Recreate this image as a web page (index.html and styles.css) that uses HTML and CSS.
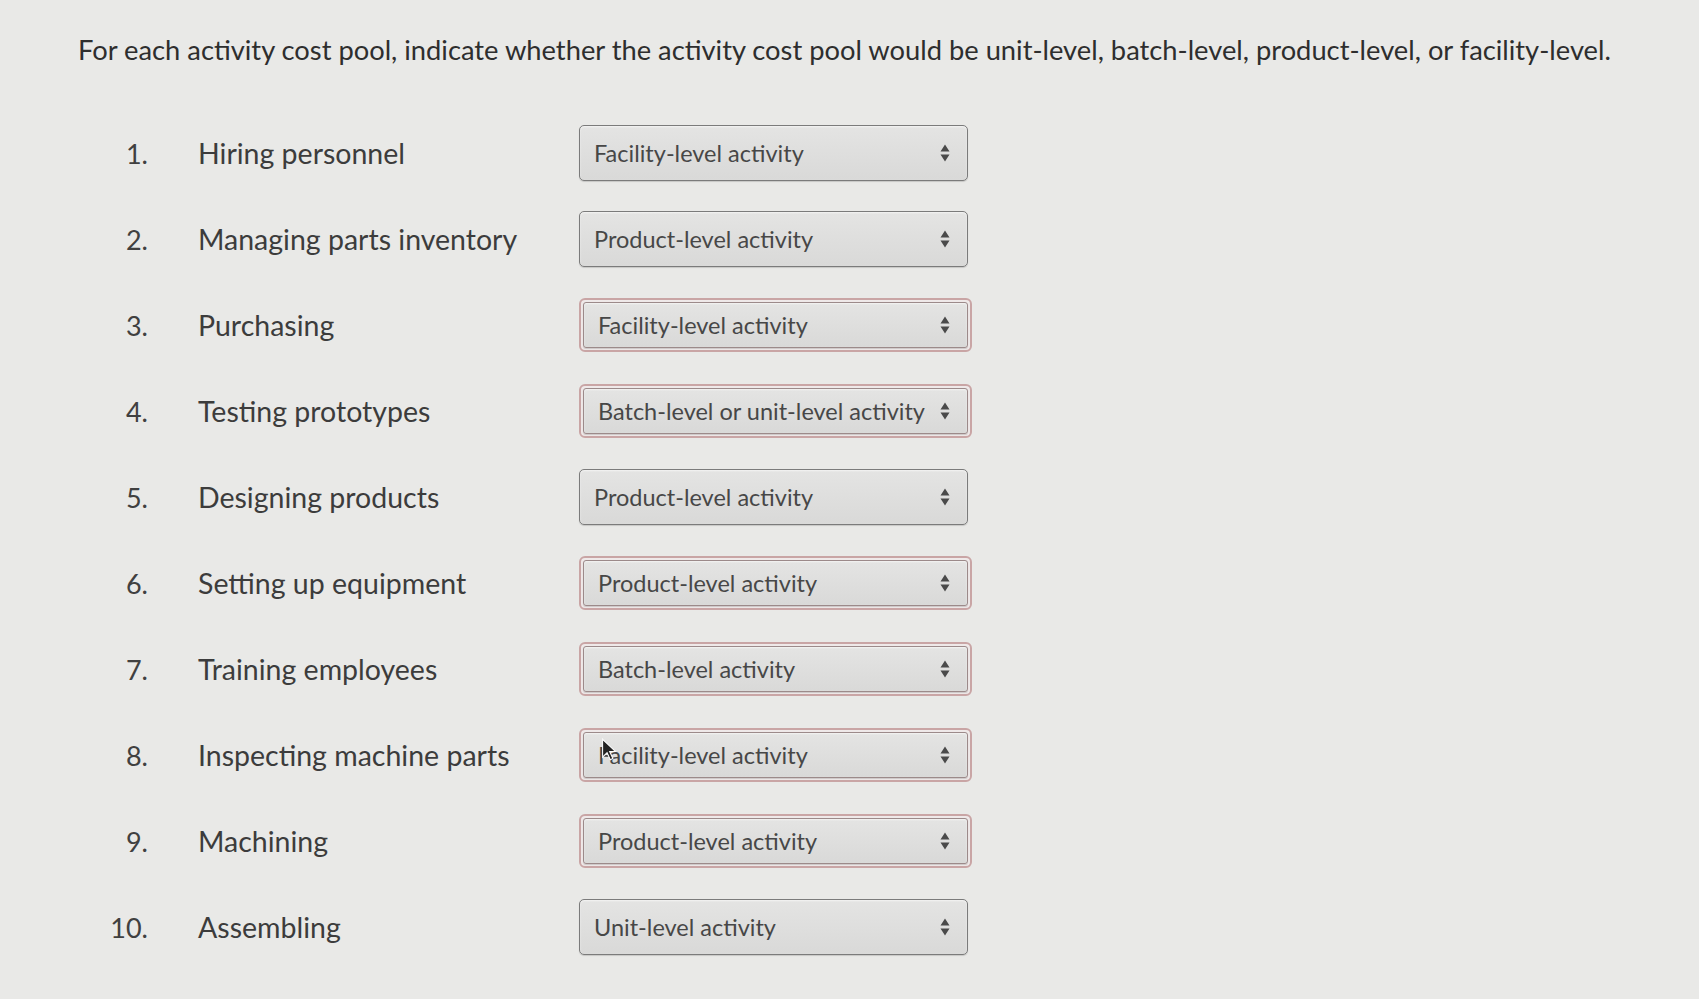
FILE: index.html
```html
<!DOCTYPE html>
<html lang="en">
<head>
<meta charset="utf-8">
<title>Activity cost pools</title>
<link rel="stylesheet" href="styles.css">
</head>
<body>
<main class="page">
  <p class="prompt">For each activity cost pool, indicate whether the activity cost pool would be unit-level, batch-level, product-level, or facility-level.</p>
  <ol class="items">
    <li class="item"><span class="num">1.</span><span class="label">Hiring personnel</span>
      <div class="answer"><div class="select"><span class="value">Facility-level activity</span><svg class="arrows" viewBox="0 0 10 20"><path d="M5 1.5 L9.5 8.5 H0.5 Z M5 18.5 L9.5 11.5 H0.5 Z"/></svg></div></div></li>
    <li class="item"><span class="num">2.</span><span class="label">Managing parts inventory</span>
      <div class="answer"><div class="select"><span class="value">Product-level activity</span><svg class="arrows" viewBox="0 0 10 20"><path d="M5 1.5 L9.5 8.5 H0.5 Z M5 18.5 L9.5 11.5 H0.5 Z"/></svg></div></div></li>
    <li class="item"><span class="num">3.</span><span class="label">Purchasing</span>
      <div class="answer wrong"><div class="select"><span class="value">Facility-level activity</span><svg class="arrows" viewBox="0 0 10 20"><path d="M5 1.5 L9.5 8.5 H0.5 Z M5 18.5 L9.5 11.5 H0.5 Z"/></svg></div></div></li>
    <li class="item"><span class="num">4.</span><span class="label">Testing prototypes</span>
      <div class="answer wrong"><div class="select"><span class="value">Batch-level or unit-level activity</span><svg class="arrows" viewBox="0 0 10 20"><path d="M5 1.5 L9.5 8.5 H0.5 Z M5 18.5 L9.5 11.5 H0.5 Z"/></svg></div></div></li>
    <li class="item"><span class="num">5.</span><span class="label">Designing products</span>
      <div class="answer"><div class="select"><span class="value">Product-level activity</span><svg class="arrows" viewBox="0 0 10 20"><path d="M5 1.5 L9.5 8.5 H0.5 Z M5 18.5 L9.5 11.5 H0.5 Z"/></svg></div></div></li>
    <li class="item"><span class="num">6.</span><span class="label">Setting up equipment</span>
      <div class="answer wrong"><div class="select"><span class="value">Product-level activity</span><svg class="arrows" viewBox="0 0 10 20"><path d="M5 1.5 L9.5 8.5 H0.5 Z M5 18.5 L9.5 11.5 H0.5 Z"/></svg></div></div></li>
    <li class="item"><span class="num">7.</span><span class="label">Training employees</span>
      <div class="answer wrong"><div class="select"><span class="value">Batch-level activity</span><svg class="arrows" viewBox="0 0 10 20"><path d="M5 1.5 L9.5 8.5 H0.5 Z M5 18.5 L9.5 11.5 H0.5 Z"/></svg></div></div></li>
    <li class="item"><span class="num">8.</span><span class="label">Inspecting machine parts</span>
      <div class="answer wrong"><div class="select"><span class="value">Facility-level activity</span><svg class="arrows" viewBox="0 0 10 20"><path d="M5 1.5 L9.5 8.5 H0.5 Z M5 18.5 L9.5 11.5 H0.5 Z"/></svg></div>
        <svg class="cursor" viewBox="0 0 12 18"><path d="M1 1 L1 15 L4.5 11.5 L7 17 L9 16 L6.5 10.5 L11 10.5 Z"/></svg></div></li>
    <li class="item"><span class="num">9.</span><span class="label">Machining</span>
      <div class="answer wrong"><div class="select"><span class="value">Product-level activity</span><svg class="arrows" viewBox="0 0 10 20"><path d="M5 1.5 L9.5 8.5 H0.5 Z M5 18.5 L9.5 11.5 H0.5 Z"/></svg></div></div></li>
    <li class="item"><span class="num">10.</span><span class="label">Assembling</span>
      <div class="answer"><div class="select"><span class="value">Unit-level activity</span><svg class="arrows" viewBox="0 0 10 20"><path d="M5 1.5 L9.5 8.5 H0.5 Z M5 18.5 L9.5 11.5 H0.5 Z"/></svg></div></div></li>
  </ol>
</main>
</body>
</html>
```
FILE: styles.css
```css
html, body {
  margin: 0;
  padding: 0;
}
body {
  background: #e9e9e7;
  font-family: Lato, "Open Sans", "Liberation Sans", sans-serif;
  color: #3b3b3b;
  width: 1699px;
  height: 999px;
  overflow: hidden;
}
.page {
  padding: 30px 0 0 78px;
}
.prompt {
  margin: 0;
  font-size: 27.3px;
  line-height: 40px;
  color: #2e2e2e;
}
.items {
  list-style: none;
  margin: 54px 0 0 0;
  padding: 0;
  display: flex;
  flex-direction: column;
  gap: 28px;
}
.item {
  display: grid;
  grid-template-columns: 70px 331px 400px;
  column-gap: 50px;
  align-items: center;
  height: 58px;
}
.num {
  text-align: right;
  font-size: 27px;
  color: #404040;
}
.label {
  font-size: 28.5px;
  color: #3c3c3c;
}
.answer {
  position: relative;
  width: 389px;
  height: 56px;
  box-sizing: border-box;
  border-radius: 6px;
  display: flex;
}
.answer.wrong {
  width: 393px;
  height: 54px;
  border: 2px solid #c9a5a5;
  padding: 2px;
  background: #efe9e9;
}
.select {
  flex: 1;
  display: flex;
  align-items: center;
  justify-content: space-between;
  padding: 0 17px 0 14px;
  border: 1.5px solid #7b7b7b;
  border-radius: 5px;
  background: linear-gradient(#e4e4e3, #d9d9d8);
  box-shadow: inset 0 1px 2px rgba(255,255,255,0.6), 0 1px 1px rgba(0,0,0,0.15);
}
.wrong .select {
  border-color: #9c8a8a;
  border-radius: 3px;
}
.value {
  font-size: 23.5px;
  color: #474747;
  white-space: nowrap;
}
.arrows {
  width: 10px;
  height: 20px;
  fill: #4a4a4a;
  flex: none;
}
.cursor {
  position: absolute;
  left: 20px;
  top: 8px;
  width: 16px;
  height: 23px;
  fill: #222;
  stroke: #fff;
  stroke-width: 0.8;
}
```
